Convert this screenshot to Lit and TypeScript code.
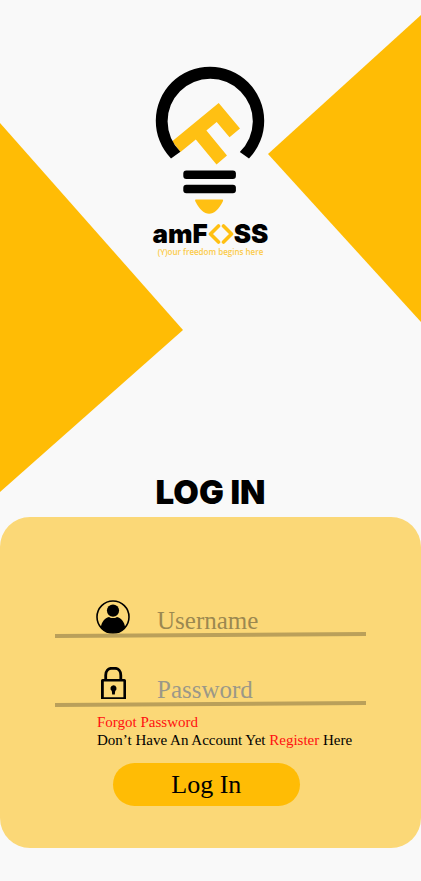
import { LitElement, html, css, svg } from "lit";
import { customElement, property } from "lit/decorators.js";

const userIcon = svg`
  <circle cx="17" cy="19" r="16" fill="none" stroke="#000" stroke-width="1.6" />
  <circle cx="17" cy="12.6" r="6.1" />
  <path d="M4.8 29.6C5.6 23.5 8.8 20 13 18.9C15.5 20.5 18.5 20.5 21 18.9C25.2 20 28.4 23.5 29.2 29.6A16.4 16.4 0 0 1 4.8 29.6Z" />
`;

const lockIcon = svg`
  <path d="M9.7 13V8.2C9.7 4 12.3 1.3 15.5 1.3H19C22.2 1.3 24.8 4 24.8 8.2V13" fill="none" stroke="#000" stroke-width="2.8" />
  <path fill-rule="evenodd" d="M6.6 12H28.4Q30 12 30 13.6V32H5V13.6Q5 12 6.6 12ZM7.8 14.6V30.2H27.4V14.6Z" />
  <path d="M17.4 18.2A3.2 3.2 0 0 1 19.2 24L18.8 27.4H16.2L15.8 24A3.2 3.2 0 0 1 17.4 18.2Z" />
`;

@customElement("amfoss-logo")
export class AmfossLogo extends LitElement {
  static styles = css`
    :host {
      display: flex;
      flex-direction: column;
      align-items: center;
    }
    .bulb {
      display: block;
      width: 111px;
      height: 149px;
    }
    .wordmark {
      display: flex;
      align-items: center;
      margin-top: 7px;
      font: 900 26px/24px Inter, sans-serif;
      color: #000;
    }
    .chevrons {
      width: 26px;
      height: 20px;
    }
    .tagline {
      margin: 0;
      font: 600 8px/12px "Open Sans", sans-serif;
      color: #fccb48;
      white-space: nowrap;
    }
  `;

  render() {
    return html`
      <svg class="bulb" viewBox="155 66 111 149" aria-hidden="true">
        <path fill="#ffc013" d="M172.2 141.3L218.7 103L240 128.5L229.5 137.3L216.7 122L206.4 130.5L227 155.5L216.5 164.5L195.8 139.5L180.5 152Z" />
        <path d="M171 158.5A54.2 54.2 0 1 1 249 158.5L239.8 151.9A42.6 42.6 0 1 0 180.4 151.7Z" />
        <rect x="183.3" y="170.4" width="52.6" height="8.6" rx="3" />
        <rect x="183.3" y="184.8" width="52.6" height="8.4" rx="3" />
        <path fill="#ffc013" d="M196 199.6H222.2Q223.6 199.6 223 201C219 209.5 214 213.7 209.1 213.7C204.2 213.7 199.2 209.5 195.2 201Q194.6 199.6 196 199.6Z" />
      </svg>
      <div class="wordmark">
        <span>amF</span>
        <svg class="chevrons" viewBox="0 0 26 20" fill="none" stroke="#ffc013" stroke-width="3.6" stroke-linecap="round" stroke-linejoin="round" role="img" aria-label="O">
          <path d="M10.5 2L2.5 10L10.5 18M15.5 2L23.5 10L15.5 18" />
        </svg>
        <span>SS</span>
      </div>
      <p class="tagline">(Y)our freedom begins here</p>
    `;
  }
}

@customElement("login-field")
export class LoginField extends LitElement {
  @property() name = "";
  @property() type = "text";
  @property() label = "";

  static styles = css`
    :host {
      display: block;
    }
    .row {
      display: grid;
      grid-template-columns: 34px 1fr;
      column-gap: 27px;
      height: 36px;
      padding-left: 41px;
    }
    .icon {
      display: block;
      width: 34px;
      height: 36px;
    }
    .input {
      box-sizing: border-box;
      width: 100%;
      min-width: 0;
      height: 36px;
      margin: 0;
      padding: 10px 0 0;
      border: 0;
      outline: 0;
      background: transparent;
      color: #000;
      font: 25px/26px "Liberation Serif", serif;
    }
    .input::placeholder {
      color: #9b8850;
      opacity: 1;
    }
    .input[type="password"]::placeholder {
      color: #9b9888;
    }
    .line {
      display: block;
      position: relative;
      width: 100%;
      height: 6px;
      margin-top: -2px;
      fill: #baa05a;
    }
  `;

  render() {
    return html`
      <div class="row">
        <label for="control" aria-label=${this.label}>
          <svg class="icon" viewBox="0 0 34 36" aria-hidden="true">
            ${this.type === "password" ? lockIcon : userIcon}
          </svg>
        </label>
        <input class="input" id="control" name=${this.name} type=${this.type} placeholder=${this.label} />
      </div>
      <svg class="line" viewBox="0 0 311 6" preserveAspectRatio="none" aria-hidden="true">
        <path d="M0 2L311 0V4L0 6Z" />
      </svg>
    `;
  }
}

@customElement("app-root")
export class AppRoot extends LitElement {
  static styles = css`
    :host {
      display: block;
      min-height: 100vh;
      background: #f9f9f9;
    }
    .page {
      position: relative;
      display: flex;
      flex-direction: column;
      box-sizing: border-box;
      min-height: 100vh;
      padding: 66px 0 33px;
      overflow: hidden;
    }
    .shape {
      position: absolute;
      fill: #ffbc05;
    }
    .left {
      left: 0;
      top: 123px;
      width: 183px;
      height: 369px;
    }
    .right {
      right: 0;
      top: 15px;
      width: 153px;
      height: 307px;
    }
    .logo {
      position: relative;
    }
    .title {
      margin: 218px 0 9px;
      text-align: center;
      font: 900 33px/32px Inter, sans-serif;
      color: #000;
    }
    .card {
      display: flex;
      flex-direction: column;
      padding: 81px 55px 42px;
      border-radius: 30px;
      background: #fbd877;
      font-family: "Liberation Serif", serif;
    }
    .fields {
      display: grid;
      row-gap: 29px;
    }
    .help {
      margin: 6px 0 14px 42px;
      font-size: 15px;
      line-height: 18px;
      color: #000;
      white-space: nowrap;
    }
    .help p {
      margin: 0;
    }
    .link {
      color: #ff1010;
      text-decoration: none;
    }
    .submit {
      width: 60%;
      height: 43px;
      margin: 0 0 0 58px;
      padding: 0;
      border: 0;
      border-radius: 22px;
      background: #ffbc05;
      color: #000;
      font: 26px/43px "Liberation Serif", serif;
      cursor: pointer;
    }
  `;

  render() {
    return html`
      <main class="page">
        <svg class="shape left" viewBox="0 0 183 369" aria-hidden="true"><path d="M0 0L183 207L0 369Z" /></svg>
        <svg class="shape right" viewBox="0 0 153 307" aria-hidden="true"><path d="M153 0L0 139L153 307Z" /></svg>
        <amfoss-logo class="logo"></amfoss-logo>
        <h1 class="title">LOG IN</h1>
        <form class="card" @submit=${(e: Event) => e.preventDefault()}>
          <div class="fields">
            <login-field name="username" type="text" label="Username"></login-field>
            <login-field name="password" type="password" label="Password"></login-field>
          </div>
          <div class="help">
            <p><a class="link" href="#forgot">Forgot Password</a></p>
            <p>Don’t Have An Account Yet <a class="link" href="#register">Register</a> Here</p>
          </div>
          <button class="submit" type="submit">Log In</button>
        </form>
      </main>
    `;
  }
}
